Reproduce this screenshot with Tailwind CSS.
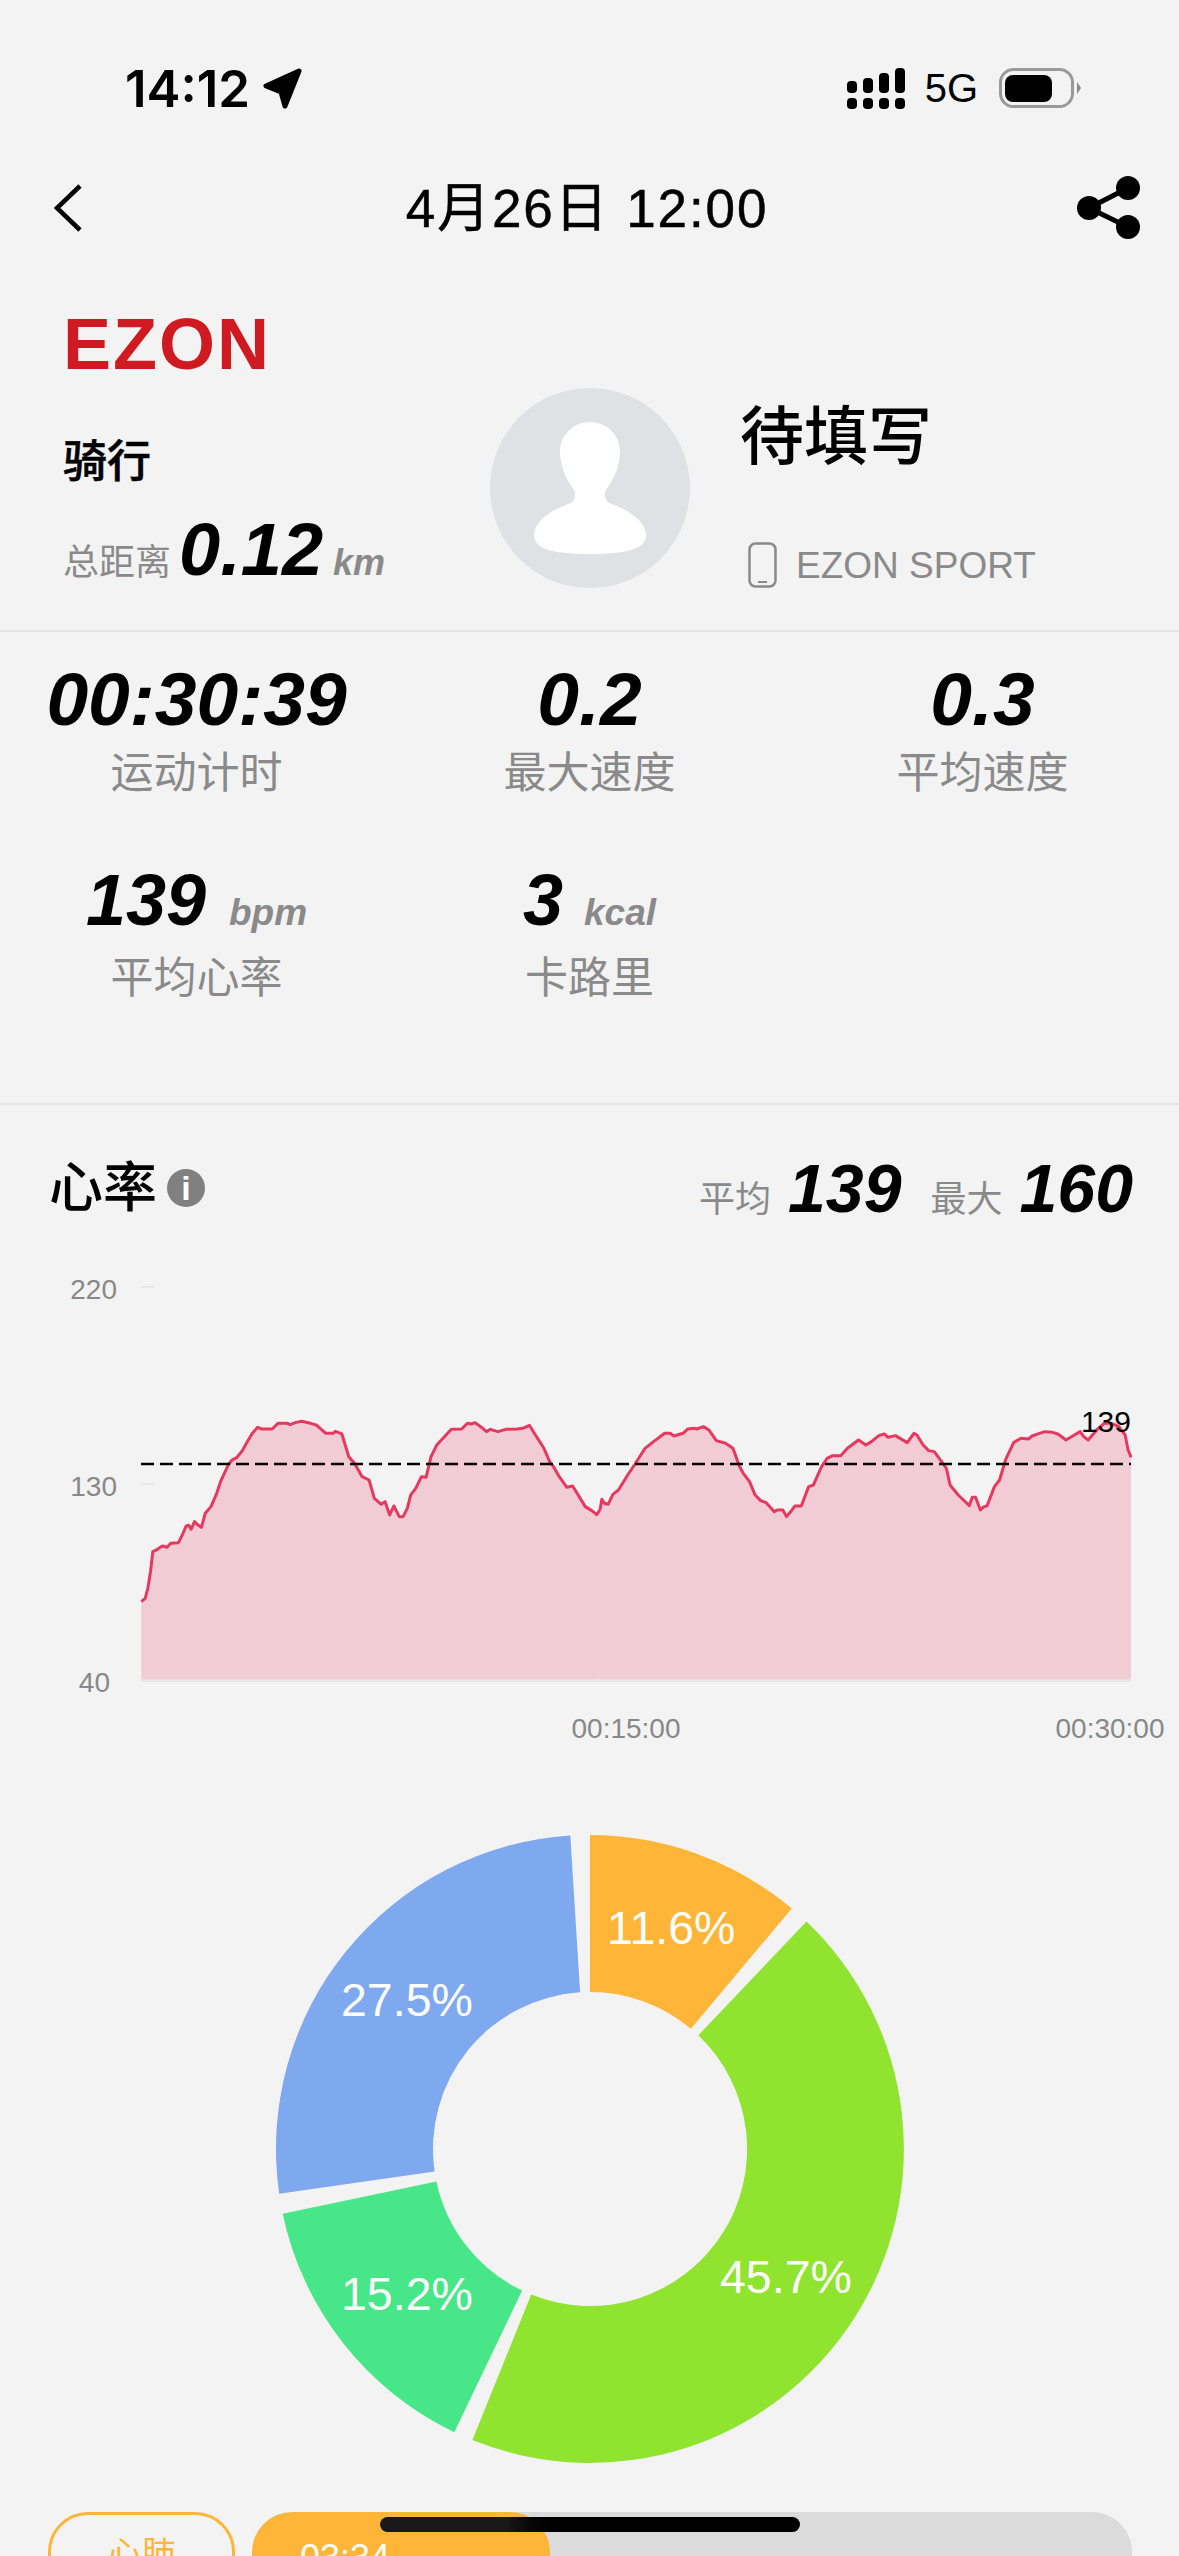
<!DOCTYPE html>
<html lang="zh-CN">
<head>
    <meta charset="UTF-8">
    <meta name="viewport" content="width=device-width, initial-scale=1.0">
    <title>骑行详情</title>
    <script src="https://cdn.jsdelivr.net/npm/@tailwindcss/browser@4"></script>
</head>
<body class="bg-[#f3f3f3] font-['Liberation_Sans','Noto_Sans_CJK_SC',sans-serif] text-black">
<div class="relative w-[1179px] h-[2556px] overflow-hidden">

    <!-- status bar -->
    <div class="pt-[44px] h-[132px] flex items-center justify-between pl-[125px] pr-[98px]">
        <div class="flex items-center gap-[12px]">
            <span class="font-['Inter',sans-serif] font-semibold text-[51px] leading-none">14:12</span>
            <svg class="w-[42px] h-[44px]" viewBox="260 66 42 44">
                <path d="M297 71 264 86 279 92 283 106Z" fill="#000" stroke="#000" stroke-width="5" stroke-linejoin="round"/>
            </svg>
        </div>
        <div class="flex items-center">
            <svg class="w-[58px] h-[41px]" viewBox="846 67 58 41" fill="#000">
                <rect x="846" y="80" width="10" height="12" rx="4"/><rect x="846" y="97" width="10" height="11" rx="4"/>
                <rect x="862" y="77" width="10" height="15" rx="4"/><rect x="862" y="97" width="10" height="11" rx="4"/>
                <rect x="878" y="72" width="10" height="20" rx="4"/><rect x="878" y="97" width="10" height="11" rx="4"/>
                <rect x="894" y="67" width="10" height="25" rx="4"/><rect x="894" y="97" width="10" height="11" rx="4"/>
            </svg>
            <span class="ml-[20px] text-[40px] leading-none">5G</span>
            <svg class="ml-[20px] w-[83px] h-[42px]" viewBox="998 66 83 42">
                <rect x="1000.5" y="68.5" width="72" height="37" rx="13" fill="none" stroke="#999" stroke-width="3"/>
                <rect x="1005" y="74" width="47" height="27" rx="8" fill="#000"/>
                <path d="M1077 81 1081 87 1077 93Z" fill="#888"/>
            </svg>
        </div>
    </div>

    <!-- nav -->
    <div class="relative h-[152px] flex items-center justify-between pl-[52px] pr-[37px]">
        <svg class="w-[32px] h-[50px]" viewBox="0 0 32 50">
            <path d="M28 3 5 25 28 47" fill="none" stroke="#000" stroke-width="4.5"/>
        </svg>
        <h1 class="text-[53px] leading-none tracking-[1.9px] ml-[14px] [-webkit-text-stroke:0.5px_#000]">4月26日 12:00</h1>
        <svg class="w-[66px] h-[66px]" viewBox="1076 175 66 66">
            <path d="M1128 188 1089 208 1128 227" fill="none" stroke="#000" stroke-width="5"/>
            <circle cx="1128" cy="188" r="12" fill="#000"/>
            <circle cx="1089" cy="208" r="12" fill="#000"/>
            <circle cx="1128" cy="227" r="12" fill="#000"/>
        </svg>
    </div>

    <!-- profile -->
    <div class="h-[348px] border-b-2 border-[#e4e4e4] flex">
        <div class="w-[490px] pl-[63px] pt-[25px]">
            <div class="text-[#cf1a22] font-bold text-[72px] leading-[70px] tracking-[2px]">EZON</div>
            <div class="mt-[58px] text-[44px] leading-[50px] font-medium [-webkit-text-stroke:0.6px_#000]">骑行</div>
            <div class="mt-[25px] flex items-baseline">
                <span class="text-[#8a8a8a] text-[36px] mr-[8px]">总距离</span>
                <span class="font-bold italic text-[74px] leading-[76px]">0.12</span>
                <span class="ml-[10px] text-[#8a8a8a] font-bold italic text-[36px]">km</span>
            </div>
        </div>
        <div class="mt-[104px] w-[200px] h-[200px] rounded-full bg-[#e0e1e5] shrink-0">
            <svg class="w-[200px] h-[200px]" viewBox="0 0 200 200">
                <path d="M100 34C118 34 130 48 130 64C130 80 122 94 116 102C114 106 115 112 119 115C140 122 156 134 156 147C156 160 140 166 100 166C60 166 44 160 44 147C44 134 60 122 81 115C85 112 86 106 84 102C78 94 70 80 70 64C70 48 82 34 100 34Z" fill="#fff"/>
            </svg>
        </div>
        <div class="ml-[50px] pt-[115px]">
            <div class="text-[64px] leading-[76px] font-medium">待填写</div>
            <div class="mt-[67px] ml-[8px] flex items-center gap-[19px]">
                <svg class="w-[29px] h-[46px]" viewBox="0 0 29 46">
                    <rect x="1.5" y="1.5" width="26" height="43" rx="6" fill="none" stroke="#8a8a8a" stroke-width="2.5"/>
                    <path d="M10 40H19" stroke="#8a8a8a" stroke-width="2"/>
                </svg>
                <span class="text-[#8a8a8a] text-[37px] leading-none">EZON SPORT</span>
            </div>
        </div>
    </div>

    <!-- stats -->
    <div class="h-[473px] border-b-2 border-[#e4e4e4] pt-[29px]">
        <div class="grid grid-cols-3">
            <div class="flex flex-col items-center">
                <span class="font-bold italic text-[75px] leading-[76px]">00:30:39</span>
                <span class="mt-[11px] text-[#8a8a8a] text-[43px] leading-[50px]">运动计时</span>
            </div>
            <div class="flex flex-col items-center">
                <span class="font-bold italic text-[75px] leading-[76px]">0.2</span>
                <span class="mt-[11px] text-[#8a8a8a] text-[43px] leading-[50px]">最大速度</span>
            </div>
            <div class="flex flex-col items-center">
                <span class="font-bold italic text-[75px] leading-[76px]">0.3</span>
                <span class="mt-[11px] text-[#8a8a8a] text-[43px] leading-[50px]">平均速度</span>
            </div>
        </div>
        <div class="grid grid-cols-3 mt-[64px]">
            <div class="flex flex-col items-center">
                <div class="flex items-baseline gap-[23px]">
                    <span class="font-bold italic text-[72px] leading-[76px]">139</span>
                    <span class="text-[#8a8a8a] font-bold italic text-[37px]">bpm</span>
                </div>
                <span class="mt-[12px] text-[#8a8a8a] text-[43px] leading-[50px]">平均心率</span>
            </div>
            <div class="flex flex-col items-center">
                <div class="flex items-baseline gap-[21px]">
                    <span class="font-bold italic text-[72px] leading-[76px]">3</span>
                    <span class="text-[#8a8a8a] font-bold italic text-[37px]">kcal</span>
                </div>
                <span class="mt-[12px] text-[#8a8a8a] text-[43px] leading-[50px]">卡路里</span>
            </div>
        </div>
    </div>

    <!-- heart rate header -->
    <div class="pt-[38px] pb-[27px] pl-[49px] pr-[46px]">
        <div class="h-[90px] flex items-center justify-between">
            <div class="flex items-center gap-[10px]">
                <span class="text-[54px] leading-none font-medium">心率</span>
                <span class="w-[38px] h-[38px] rounded-full bg-[#808080] text-white font-bold text-[34px] leading-none flex items-center justify-center">i</span>
            </div>
            <div class="flex items-baseline">
                <span class="text-[#8a8a8a] text-[36px]">平均</span>
                <span class="ml-[17px] font-bold italic text-[68px] leading-[76px]">139</span>
                <span class="ml-[29px] text-[#8a8a8a] text-[36px]">最大</span>
                <span class="ml-[17px] font-bold italic text-[68px] leading-[76px]">160</span>
            </div>
        </div>
    </div>

    <!-- heart rate chart -->
    <svg class="block w-[1179px] h-[500px]" viewBox="0 1260 1179 500">
        <path d="M141 1287H154M141 1484H154" stroke="#e8e8e8" stroke-width="2"/>
        <path d="M141 1680.5H1131" stroke="#e8e8e8" stroke-width="3"/>
        <g transform="translate(100 1260) scale(.3827 .3333)">
            <path fill="#f2ccd4" d="M108 1025 118 1015 125 985 132 935 138 875 150 868 163 858 175 862 185 850 205 848 215 825 225 798 232 796 238 808 247 785 256 795 265 802 275 760 290 740 305 700 315 665 325 640 335 615 345 600 358 592 372 572 385 545 398 520 412 502 422 507 450 507 465 490 490 490 497 494 510 488 527 484 550 490 565 495 590 520 610 520 615 514 632 522 650 590 665 610 685 650 703 660 717 715 735 733 745 725 757 765 768 738 782 770 792 770 803 745 812 705 825 685 840 650 852 652 865 590 880 555 918 508 945 507 960 490 970 492 980 488 1000 505 1010 515 1020 508 1040 515 1060 508 1090 507 1105 505 1122 496 1135 520 1160 565 1175 605 1185 620 1200 650 1220 682 1235 678 1268 740 1285 752 1298 764 1306 750V1258H108Z"/>
        </g>
        <g transform="translate(600 1260) scale(.3693 .3333)">
            <path fill="#f2ccd4" d="M-2 755 5 718 12 730 22 733 35 703 50 690 75 645 95 612 122 565 145 545 175 520 190 520 200 528 225 520 238 507 255 505 262 507 280 500 295 510 315 542 340 550 360 565 378 620 388 640 405 665 420 705 435 722 450 728 472 755 480 750 495 750 505 770 520 750 528 738 545 738 565 680 578 675 600 620 615 595 630 587 652 587 670 565 700 540 720 555 735 545 755 527 770 522 780 532 800 527 832 548 850 520 858 525 875 555 890 572 905 575 925 605 938 625 948 675 970 705 1000 737 1008 712 1017 712 1030 750 1040 740 1048 738 1068 680 1082 660 1098 600 1120 548 1140 535 1160 537 1170 528 1190 520 1205 515 1225 517 1240 522 1262 540 1280 528 1300 515 1310 530 1322 540 1345 510 1365 490 1385 490 1405 500 1422 525 1430 570 1438 592V1258H-2Z"/>
        </g>
        <g transform="translate(100 1260) scale(.3827 .3333)" fill="none" stroke="#e5395f" stroke-width="3" stroke-linejoin="round">
            <path vector-effect="non-scaling-stroke" d="M108 1025 118 1015 125 985 132 935 138 875 150 868 163 858 175 862 185 850 205 848 215 825 225 798 232 796 238 808 247 785 256 795 265 802 275 760 290 740 305 700 315 665 325 640 335 615 345 600 358 592 372 572 385 545 398 520 412 502 422 507 450 507 465 490 490 490 497 494 510 488 527 484 550 490 565 495 590 520 610 520 615 514 632 522 650 590 665 610 685 650 703 660 717 715 735 733 745 725 757 765 768 738 782 770 792 770 803 745 812 705 825 685 840 650 852 652 865 590 880 555 918 508 945 507 960 490 970 492 980 488 1000 505 1010 515 1020 508 1040 515 1060 508 1090 507 1105 505 1122 496 1135 520 1160 565 1175 605 1185 620 1200 650 1220 682 1235 678 1268 740 1285 752 1298 764 1306 750"/>
        </g>
        <g transform="translate(600 1260) scale(.3693 .3333)" fill="none" stroke="#e5395f" stroke-width="3" stroke-linejoin="round">
            <path vector-effect="non-scaling-stroke" d="M0 750 5 718 12 730 22 733 35 703 50 690 75 645 95 612 122 565 145 545 175 520 190 520 200 528 225 520 238 507 255 505 262 507 280 500 295 510 315 542 340 550 360 565 378 620 388 640 405 665 420 705 435 722 450 728 472 755 480 750 495 750 505 770 520 750 528 738 545 738 565 680 578 675 600 620 615 595 630 587 652 587 670 565 700 540 720 555 735 545 755 527 770 522 780 532 800 527 832 548 850 520 858 525 875 555 890 572 905 575 925 605 938 625 948 675 970 705 1000 737 1008 712 1017 712 1030 750 1040 740 1048 738 1068 680 1082 660 1098 600 1120 548 1140 535 1160 537 1170 528 1190 520 1205 515 1225 517 1240 522 1262 540 1280 528 1300 515 1310 530 1322 540 1345 510 1365 490 1385 490 1405 500 1422 525 1430 570 1438 592"/>
        </g>
        <path d="M141 1464H1131" stroke="#000" stroke-width="2.5" stroke-dasharray="13 6"/>
        <g class="text-[28px] fill-[#888]">
            <text x="117" y="1299" text-anchor="end">220</text>
            <text x="117" y="1496" text-anchor="end">130</text>
            <text x="110" y="1692" text-anchor="end">40</text>
            <text x="626" y="1738" text-anchor="middle">00:15:00</text>
            <text x="1110" y="1738" text-anchor="middle">00:30:00</text>
        </g>
        <text x="1131" y="1432" text-anchor="end" class="text-[30px] fill-black">139</text>
    </svg>

    <!-- zone donut -->
    <svg class="block mt-[75px] mx-auto w-[628px] h-[628px]" viewBox="-314 -314 628 628">
        <path fill="#ffb638" d="M0-314A314 314 0 0 1 201.8-240.5L100.9-120.3A157 157 0 0 0 0-157Z"/>
        <path fill="#90e32f" d="M216.5-227.4A314 314 0 0 1-117.6 291.1L-58.8 145.6A157 157 0 0 0 108.3-113.7Z"/>
        <path fill="#47e688" d="M-135.7 283.2A314 314 0 0 1-307.3 64.7L-153.6 32.4A157 157 0 0 0-67.8 141.6Z"/>
        <path fill="#7fa9ee" d="M-310.8 44.8A314 314 0 0 1-19.7-313.4L-9.9-156.7A157 157 0 0 0-155.4 22.4Z"/>
        <g class="text-[46.5px] fill-white">
            <text x="17" y="-205">11.6%</text>
            <text x="-249" y="-133">27.5%</text>
            <text x="130" y="144">45.7%</text>
            <text x="-249" y="161">15.2%</text>
        </g>
    </svg>

    <!-- zone bars -->
    <div class="mt-[49px] flex gap-[17px] pl-[48px]">
        <div class="w-[187px] h-[100px] shrink-0 rounded-[40px] border-[3px] border-[#ffb638] text-[#ffb638] text-[34px] leading-none text-center pt-[22px]">心肺</div>
        <div class="w-[880px] h-[100px] rounded-[40px] bg-[#dbdbdb] overflow-hidden">
            <div class="w-[298px] h-[100px] rounded-[40px] bg-[#ffb638] text-white text-[36px] leading-none pl-[48px] pt-[28px]">03:34</div>
        </div>
    </div>

    <!-- home indicator -->
    <div class="absolute left-[380px] top-[2517px] w-[420px] h-[15px] rounded-[8px] bg-linear-to-r from-[#191919] from-30% to-black to-45%"></div>
</div>
</body>
</html>
